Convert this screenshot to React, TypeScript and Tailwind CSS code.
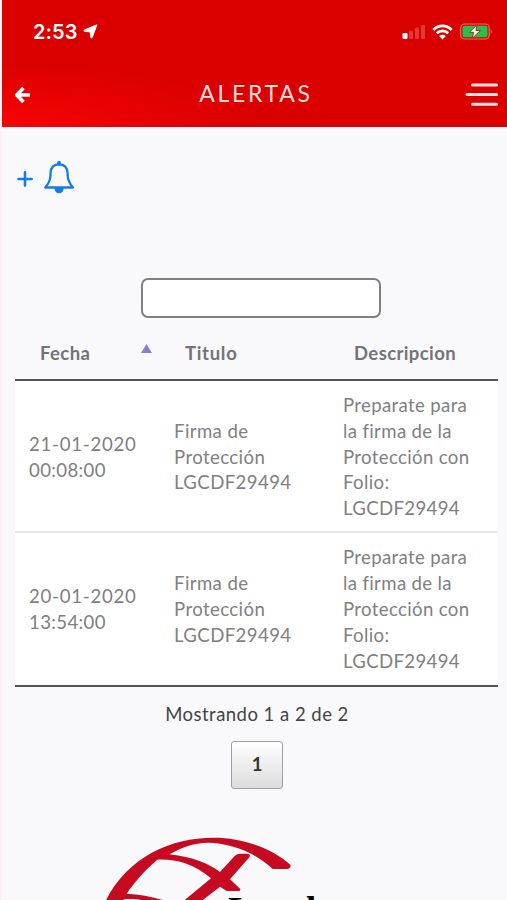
import type { ReactNode } from 'react'

interface Alert {
  date: string
  time: string
  title: string[]
  description: string[]
}

const alerts: Alert[] = [
  {
    date: '21-01-2020',
    time: '00:08:00',
    title: ['Firma de', 'Protección', 'LGCDF29494'],
    description: ['Preparate para', 'la firma de la', 'Protección con', 'Folio:', 'LGCDF29494'],
  },
  {
    date: '20-01-2020',
    time: '13:54:00',
    title: ['Firma de', 'Protección', 'LGCDF29494'],
    description: ['Preparate para', 'la firma de la', 'Protección con', 'Folio:', 'LGCDF29494'],
  },
]

function StatusBar() {
  return (
    <div className="flex h-[63px] items-center justify-between pr-[14px] pl-[31px]">
      <div className="flex items-center gap-[5px]">
        <span className="font-[Inter] text-[20px] leading-none font-semibold tracking-[0.1px]">2:53</span>
        <svg className="h-[15px] w-[15px]" viewBox="0 0 14 14" fill="currentColor" stroke="currentColor" strokeWidth="0.9" strokeLinejoin="round">
          <path d="M13 0.8L8.6 12.6Q8 13.6 7.2 12.6L6.8 7.4L1.2 6.8Q0.2 6.1 1.2 5.5Z" />
        </svg>
      </div>
      <div className="flex items-center">
        <svg className="h-4 w-6" viewBox="0 0 24 16" fill="currentColor">
          <rect x="0.5" y="9" width="5" height="6" rx="1.2" />
          <rect x="7" y="7" width="4" height="8" rx="1" opacity="0.22" />
          <rect x="13" y="3.5" width="4" height="11.5" rx="1" opacity="0.22" />
          <rect x="19" y="1" width="4" height="14" rx="1" opacity="0.22" />
        </svg>
        <svg className="ml-[6px] h-4 w-[21px]" viewBox="0 0 21 16" fill="none" stroke="currentColor" strokeWidth="2.7">
          <path d="M1.3 6C6.5 0.6 14.5 0.6 19.7 6" />
          <path d="M4.8 9.3C8 6.1 13 6.1 16.2 9.3" />
          <path d="M7.2 12Q10.5 9.4 13.8 12L10.5 15.5Z" fill="currentColor" stroke="none" />
        </svg>
        <svg className="ml-[7px] h-[17px] w-[33px]" viewBox="0 0 33 17">
          <rect x="0.7" y="1" width="28.5" height="15" rx="4" fill="none" stroke="#ee6a5c" strokeWidth="1.2" />
          <rect x="2.5" y="2.8" width="25" height="11.4" rx="2.2" fill="#20c44c" />
          <path d="M30.8 6Q33.2 8.5 30.8 11Z" fill="#ee6a5c" />
          <path d="M17.2 1.5L9.5 9.3H13.7L12 15.5L20.5 7.4H16Z" fill="#fff" stroke="#b91c1c" strokeWidth="1" />
        </svg>
      </div>
    </div>
  )
}

function Header() {
  return (
    <header className="h-[127px] bg-[#da0000] bg-[radial-gradient(ellipse_at_bottom_left,#f80508_0%,#ee0202_12%,#da0000_36%)] text-white">
      <StatusBar />
      <div className="flex h-[63px] items-center justify-between pr-[9px] pl-[12px]">
        <svg className="h-[18px] w-[33px]" viewBox="0 0 33 18" fill="none" stroke="currentColor" strokeWidth="3.6">
          <path d="M9.5 2L2.7 9L9.5 16M3 9H16" strokeLinejoin="round" />
        </svg>
        <h1 className="mb-[2px] font-['Lato',sans-serif] text-[23px] leading-none tracking-[2.7px] text-[#ffdede]">ALERTAS</h1>
        <svg className="h-6 w-[33px]" viewBox="0 0 33 24" stroke="#ffe0e0" strokeWidth="3" strokeLinecap="round">
          <path d="M7.5 2H31.5M2 11.5H31.5M7.5 21.3H31.5" />
        </svg>
      </div>
    </header>
  )
}

function AddAlert() {
  return (
    <div className="flex h-[152px] items-start pt-[34px] pl-[15px]">
      <svg className="mt-[10px] h-4 w-4" viewBox="0 0 16 16" stroke="#147ce5" strokeWidth="2.6" strokeLinecap="round">
        <path d="M8 1.4V14.6M1.4 8H14.6" />
      </svg>
      <svg className="ml-[10px] h-[34px] w-[32px]" viewBox="0 0 32 34" fill="none" stroke="#147ce5" strokeWidth="2.3" strokeLinejoin="round">
        <path d="M2.2 26.5C5.5 23 7.2 19.5 7.5 14.5V12C7.8 6.5 11 3.3 16 3.3S24.3 6.5 24.6 12V14.5C25 19.5 26.8 23 30 26.5Z" />
        <path d="M16 1.5V3" strokeWidth="3.4" strokeLinecap="round" />
        <path d="M11.5 27H20.7C20.7 34 11.5 34 11.5 27Z" fill="#147ce5" stroke="none" />
      </svg>
    </div>
  )
}

function HeadCell({ children }: { children: ReactNode }) {
  return <div className="pl-[25px]">{children}</div>
}

function AlertRow({ alert }: { alert: Alert }) {
  return (
    <div className="grid h-[152px] grid-cols-[145px_169px_169px] items-center border-b-2 border-[#e6e6e6] bg-white pt-[3px] text-[18.6px] leading-[25.9px] tracking-[0.35px] text-[#808080] last:border-b-0 last:pt-[2px]">
      <div className="pl-[14px] tracking-[0.75px]">
        <div>{alert.date}</div>
        <div className="tracking-[0.35px]">{alert.time}</div>
      </div>
      <div className="pl-[14px] tracking-[0.4px]">
        {alert.title.map((line) => <div key={line}>{line}</div>)}
      </div>
      <div className="pl-[14px]">
        {alert.description.map((line) => <div key={line}>{line}</div>)}
      </div>
    </div>
  )
}

function AlertTable() {
  return (
    <div className="mr-[9px] ml-[13px]">
      <div className="grid h-[61px] grid-cols-[145px_169px_169px] items-center pt-[11px] text-[18.5px] font-bold tracking-[0.4px] text-[#747477]">
        <HeadCell>
          <div className="flex items-center justify-between pr-[8px]">
            Fecha
            <svg className="mb-[11px] h-[9px] w-[11px]" viewBox="0 0 11 9" fill="#8080d8">
              <path d="M5.5 0L11 9H0Z" />
            </svg>
          </div>
        </HeadCell>
        <HeadCell>
          <span className="tracking-[0.7px]">Titulo</span>
        </HeadCell>
        <HeadCell>Descripcion</HeadCell>
      </div>
      <div className="border-y-2 border-[#555555]">
        {alerts.map((alert) => <AlertRow key={alert.date} alert={alert} />)}
      </div>
    </div>
  )
}

function Logo() {
  return (
    <div className="relative mt-[42px] ml-[78px] h-[70px] w-[340px]">
      <svg className="h-[70px] w-[340px]" viewBox="0 420 1020 210" fill="#c50a22">
        <path
          fillRule="evenodd"
          d="M76 632C140 500 270 440 400 440C490 440 575 472 631 521Q634 533 622 534H578C520 480 450 457 385 455C340 455 300 472 268 490C340 498 385 518 420 543L464 495Q470 488 482 488H502Q514 490 508 499L450 565L481 594Q482 600 474 600H440L420 587L362 632H308L393 562C340 518 290 504 232 506C192 540 162 575 140 608C182 610 225 618 262 632H208C184 625 152 623 132 625L128 632Z"
        />
      </svg>
      <span className="absolute top-[61px] left-[148px] font-['Liberation_Serif',serif] text-[37px] leading-none font-bold text-black">Legal</span>
    </div>
  )
}

export default function App() {
  return (
    <div className="h-[900px] w-[507px] overflow-hidden border-l-2 border-[#fdeff3] bg-[#f9f9fc] font-['Lato',sans-serif]">
      <Header />
      <AddAlert />
      <input
        type="text"
        className="-mt-px ml-[139px] block h-10 w-[240px] rounded-[7px] border-2 border-[#808080] bg-white px-2 outline-none"
      />
      <AlertTable />
      <div className="mt-[14px] mr-[1px] flex flex-col items-center pl-[6px]">
        <p className="text-[18.5px] leading-[26px] tracking-[0.47px] text-[#444444]">Mostrando 1 a 2 de 2</p>
        <button className="mt-[14px] h-12 w-[52px] rounded-[3px] border-[1.5px] border-[#a0a0a0] bg-linear-to-b from-white to-[#dcdcdc] text-[18.5px] font-bold text-[#333333]">
          1
        </button>
      </div>
      <Logo />
    </div>
  )
}
